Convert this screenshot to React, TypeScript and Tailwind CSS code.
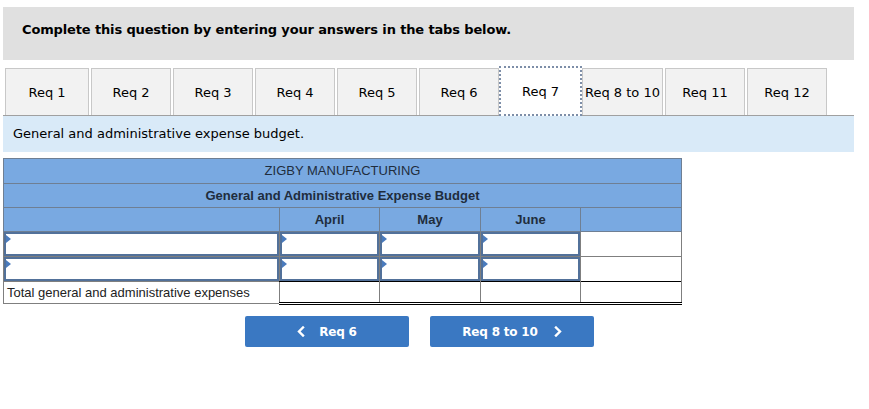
import React from 'react';

const tabs = ['Req 1', 'Req 2', 'Req 3', 'Req 4', 'Req 5', 'Req 6', 'Req 7', 'Req 8 to 10', 'Req 11', 'Req 12'];
const ACTIVE = 'Req 7';

const verdana = { fontFamily: 'Verdana, "DejaVu Sans", sans-serif' };

const tabWidth = (t: string) => {
  if (t === 'Req 1') return 'w-[84px] mr-[2px]';
  if (t === 'Req 6') return 'w-[80px] mr-0';
  if (t === 'Req 8 to 10') return 'w-[81px] mr-[2px]';
  return 'w-[80px] mr-[2px]';
};

const InputCell = () => (
  <td className="h-[25px] p-0 border border-[#7f7f7f] align-top">
    <div className="relative h-[24px] border-2 border-[#52719a] bg-white">
      <span className="absolute left-0 top-[1px] w-0 h-0 border-y-[4px] border-y-transparent border-l-[5px] border-l-[#4a7bbd]" />
    </div>
  </td>
);

const Chevron: React.FC<{ dir: 'left' | 'right' }> = ({ dir }) => (
  <svg width="8" height="11" viewBox="0 0 8 11" fill="none">
    <path
      d={dir === 'left' ? 'M6 1.5 L2 5.5 L6 9.5' : 'M2 1.5 L6 5.5 L2 9.5'}
      stroke="white"
      strokeWidth="2.4"
      strokeLinecap="square"
    />
  </svg>
);

export default function App() {
  return (
    <div className="w-[869px] h-[409px] bg-white text-[13px] text-black" style={verdana}>
      {/* instructions */}
      <div className="mx-[3px] mt-[7px] w-[851px] h-[53px] bg-[#e0e0e0] pl-[19px] pt-[14px] font-bold leading-[18px] tracking-[-0.14px]">
        Complete this question by entering your answers in the tabs below.
      </div>

      {/* tabs */}
      <div className="mt-[8px] pl-[5px] flex h-[47px]">
        {tabs.map((t) => {
          const active = t === ACTIVE;
          return (
            <div
              key={t}
              className={
                active
                  ? 'relative z-10 w-[83px] h-[50px] -mt-[2px] flex items-center justify-center bg-white border-2 border-dotted border-[#7d8ea8] whitespace-nowrap pt-[1px]'
                  : `${tabWidth(t)} h-[47px] flex items-center justify-center bg-[#f2f2f2] border border-[#c8c8c8] border-b-0 whitespace-nowrap pt-[1px]`
              }
            >
              {t}
            </div>
          );
        })}
      </div>
      <div className="mx-[3px] w-[851px] h-[37px] border-t border-[#a0a0a0] bg-[#d9eaf8] pl-[10px] flex items-center">
        General and administrative expense budget.
      </div>

      {/* budget table */}
      <table
        className="mt-[6px] ml-[3px] border-collapse table-fixed text-[#1f2d3d] text-[13px]"
        style={{ fontFamily: '"Liberation Sans", Arial, sans-serif' }}
      >
        <colgroup>
          <col className="w-[276px]" />
          <col className="w-[100px]" />
          <col className="w-[101px]" />
          <col className="w-[100px]" />
          <col className="w-[101px]" />
        </colgroup>
        <tbody>
          <tr className="bg-[#79a9e1]">
            <td colSpan={5} className="h-[25px] border border-[#6f7f93] text-center leading-[16px] p-0">
              ZIGBY MANUFACTURING
            </td>
          </tr>
          <tr className="bg-[#79a9e1]">
            <td colSpan={5} className="h-[24px] border border-[#6f7f93] text-center font-bold leading-[16px] p-0">
              General and Administrative Expense Budget
            </td>
          </tr>
          <tr className="bg-[#79a9e1] font-bold">
            <td className="h-[24px] border border-[#6f7f93] p-0" />
            <td className="border border-[#6f7f93] text-center p-0">April</td>
            <td className="border border-[#6f7f93] text-center p-0">May</td>
            <td className="border border-[#6f7f93] text-center p-0">June</td>
            <td className="border border-[#6f7f93] p-0" />
          </tr>
          {[0, 1].map((r) => (
            <tr key={r}>
              <InputCell />
              <InputCell />
              <InputCell />
              <InputCell />
              <td className="border border-[#7f7f7f] bg-white p-0" />
            </tr>
          ))}
          <tr>
            <td className="h-[22px] border border-[#7f7f7f] pl-[3px] text-[#222] p-0 leading-[14px]">
              Total general and administrative expenses
            </td>
            {[0, 1, 2, 3].map((c) => (
              <td key={c} className="p-0 border-x border-[#7f7f7f] border-t border-t-black border-b-[3px] border-b-black border-double" />
            ))}
          </tr>
        </tbody>
      </table>

      {/* nav buttons */}
      <div className="mt-[11px] ml-[245px] flex gap-[21px]">
        <button className="w-[164px] h-[31px] rounded-[2px] bg-[#3a78c2] text-white font-bold text-[12px] tracking-[-0.2px] flex items-center justify-center gap-[14px]">
          <Chevron dir="left" />
          <span>Req 6</span>
        </button>
        <button className="w-[164px] h-[31px] rounded-[2px] bg-[#3a78c2] text-white font-bold text-[12px] tracking-[-0.2px] flex items-center justify-center gap-[16px]">
          <span>Req 8 to 10</span>
          <Chevron dir="right" />
        </button>
      </div>
    </div>
  );
}
